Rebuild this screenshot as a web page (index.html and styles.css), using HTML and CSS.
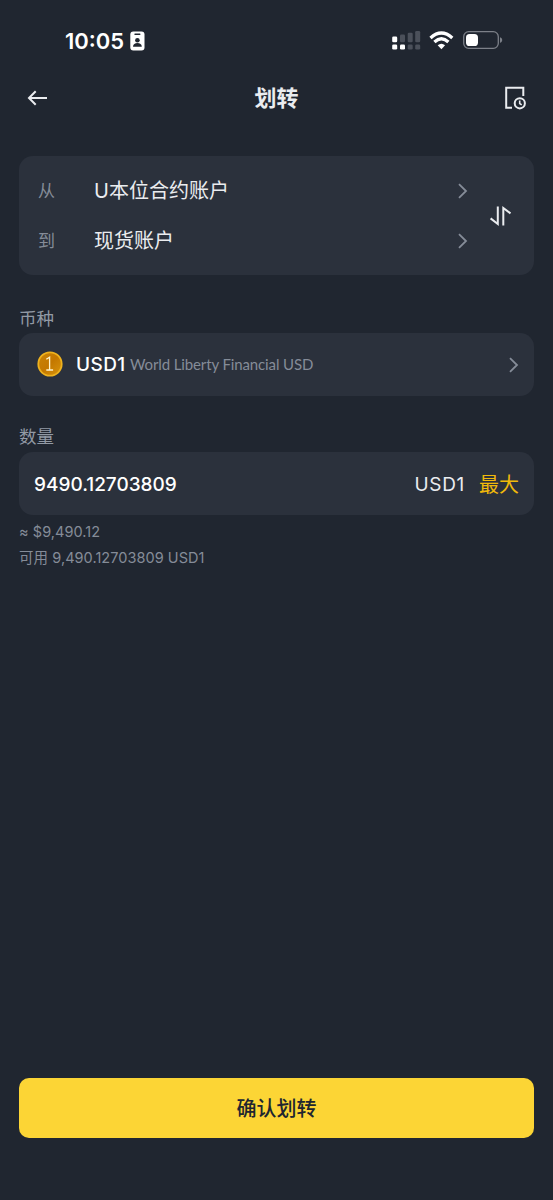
FILE: index.html
```html
<!DOCTYPE html>
<html lang="zh-CN">
<head>
<meta charset="utf-8">
<meta name="viewport" content="width=device-width">
<title>划转</title>
<link rel="stylesheet" href="styles.css">
</head>
<body>
<div class="screen">
  <div class="status">
    <div class="status-left">
      <span class="time">10:05</span>
      <svg class="badge" width="15" height="20" viewBox="0 0 15 20"><rect x="0.3" y="0.5" width="14.2" height="19" rx="3" fill="#fff"/><rect x="4.3" y="2.4" width="6.2" height="1.5" rx=".7" fill="#202630"/><circle cx="7.4" cy="9.3" r="2.3" fill="#202630"/><path d="M3 15.8c0-2.6 2-3.8 4.4-3.8s4.4 1.2 4.4 3.8z" fill="#202630"/></svg>
    </div>
    <svg class="signals" width="112" height="22" viewBox="0 0 112 22">
      <g fill="#fff"><rect x="1.2" y="6.4" width="5" height="5.8" rx="1.3"/><rect x="1.2" y="14.4" width="5" height="5.2" rx="1.3"/><rect x="9" y="14.4" width="5" height="5.2" rx="1.3"/></g>
      <g fill="#4b505a"><rect x="9" y="4.6" width="5" height="7.6" rx="1.3"/><rect x="16.7" y="2.8" width="5" height="9.4" rx="1.3"/><rect x="24.2" y="1" width="5" height="11.2" rx="1.3"/><rect x="16.7" y="14.4" width="5" height="5.2" rx="1.3"/><rect x="24.2" y="14.4" width="5" height="5.2" rx="1.3"/></g>
      <g fill="none" stroke="#fff" stroke-width="3.3"><path d="M39.5 7.9Q50.4-1.9 61.3 7.9"/><path d="M43.4 12Q50.4 5.6 57.4 12"/></g>
      <path d="M46.7 15.3Q50.4 12.1 54.1 15.3L50.4 19.2z" fill="#fff"/>
      <rect x="72.7" y="1.7" width="34.6" height="16.6" rx="5" fill="none" stroke="#7c8088" stroke-width="1.3"/>
      <rect x="75" y="4" width="12" height="12" rx="3.6" fill="#fff"/>
      <path d="M109 7.2c2.9.6 2.9 5 0 5.6z" fill="#7c8088"/>
    </svg>
  </div>
  <header class="nav">
    <svg width="22" height="18" viewBox="0 0 22 18"><path d="M20 9H2M8.7 2.3L2 9l6.7 6.7" class="line white"/></svg>
    <h1>划转</h1>
    <svg width="24" height="26" viewBox="0 0 24 26"><path d="M19.3 11V2.8H2.2v20H8" class="line white"/><circle cx="15.8" cy="18.3" r="5.1" class="line white"/><path d="M15.7 15.5v3l2 1.3" class="line white hand"/></svg>
  </header>
  <main>
    <section class="card accounts">
      <div class="rows">
        <div class="row"><span class="key">从</span><span class="value">U本位合约账户</span><svg class="chev" width="12" height="18" viewBox="0 0 12 18"><path d="M2 2.2L9 9l-7 6.8" class="line"/></svg></div>
        <div class="row"><span class="key">到</span><span class="value">现货账户</span><svg class="chev" width="12" height="18" viewBox="0 0 12 18"><path d="M2 2.2L9 9l-7 6.8" class="line"/></svg></div>
      </div>
      <svg class="swap" width="24" height="24" viewBox="0 0 24 24"><path d="M8.8 2.4V20L1.6 14.4M14.3 21.6V4l7.2 5.4" class="line white"/></svg>
    </section>
    <h2 class="label coin-label">币种</h2>
    <section class="card coin">
      <svg class="token" width="26" height="26" viewBox="0 0 26 26"><defs><linearGradient id="gold" x1="0" y1="0" x2="1" y2="1"><stop offset="0" stop-color="#c98408"/><stop offset=".5" stop-color="#c47800"/><stop offset="1" stop-color="#d8950d"/></linearGradient></defs><circle cx="13" cy="13" r="11.7" fill="url(#gold)" stroke="#eeb21e" stroke-width="1.8"/><path d="M9.3 8.3l3.3-2.2v12.7M9.3 19h6.8" fill="none" stroke="#fff2ca" stroke-width="1.3"/></svg>
      <span class="symbol">USD1</span><span class="full">World Liberty Financial USD</span>
      <svg class="chev" width="12" height="18" viewBox="0 0 12 18"><path d="M2 2.2L9 9l-7 6.8" class="line"/></svg>
    </section>
    <h2 class="label amount-label">数量</h2>
    <section class="card amount">
      <span class="number">9490.12703809</span><span class="unit">USD1</span><span class="max">最大</span>
    </section>
    <p class="note approx">≈ <span>$9,490.12</span></p>
    <p class="note available">可用 <span>9,490.12703809 USD1</span></p>
  </main>
  <button class="confirm">确认划转</button>
</div>
</body>
</html>
```

FILE: styles.css
```css
* { box-sizing: border-box; margin: 0; }
body { background: #202630; color: #eaecef; font-family: Inter, "Noto Sans CJK SC", sans-serif; }
.screen { display: flex; flex-direction: column; width: 553px; height: 1200px; padding: 0 19px 62px; }
.status { display: flex; justify-content: space-between; align-items: center; height: 62px; padding: 20px 31px 0 46px; }
.status-left { display: flex; align-items: center; gap: 5px; }
.time { width: 60px; color: #fff; font: 600 22px/26px Inter, sans-serif; white-space: nowrap; }
.nav { display: flex; justify-content: space-between; align-items: center; height: 72px; padding: 0 6px 0 8px; }
h1 { font-size: 22px; line-height: 30px; font-weight: 700; }
.line { fill: none; stroke: #858c98; stroke-width: 1.8; }
.white { stroke: #eaecef; stroke-width: 2; }
.hand { stroke-width: 1.6; }
.card { display: flex; align-items: center; background: #2b313c; border-radius: 14px; }
.accounts { height: 119px; margin-top: 22px; padding: 0 21px 0 19px; }
.rows { flex: 1; }
.row { display: flex; align-items: center; height: 50px; }
.key { width: 56px; padding-bottom: 2px; color: #858c98; font-size: 17px; }
.value { flex: 1; padding-bottom: 2px; font-size: 20px; font-weight: 400; }
.chev { margin-right: 1px; }
.swap { margin-left: 19px; }
.label { color: #929aa5; font-size: 17.5px; line-height: 24px; font-weight: 400; }
.coin-label { margin-top: 32px; }
.coin { height: 63px; margin-top: 2px; padding: 0 13px 0 18px; }
.token { margin-top: -1px; }
.symbol { width: 54px; margin-left: 13px; color: #fff; font-size: 19px; font-weight: 500; letter-spacing: .4px; }
.full { flex: 1; padding-bottom: 1px; color: #858c98; font-family: Lato, sans-serif; font-size: 15px; letter-spacing: -.12px; }
.amount-label { margin-top: 29px; }
.amount { height: 63px; margin-top: 3px; padding: 0 15px; font-size: 19px; }
.number { flex: 1; padding-top: 2px; color: #fff; font-weight: 500; letter-spacing: 0; }
.unit { padding-top: 1px; letter-spacing: .7px; }
.max { margin-left: 14px; color: #f0b90b; font-size: 20px; font-weight: 400; }
.note { color: #858c98; font-size: 14.5px; line-height: 20px; white-space: nowrap; letter-spacing: .05px; }
.approx { margin-top: 7px; }
.available { margin-top: 6px; }
.confirm { height: 60px; margin-top: auto; border: 0; border-radius: 10px; background: #fcd535; color: #202630; font: 500 20px/28px "Noto Sans CJK SC", sans-serif; }
```
